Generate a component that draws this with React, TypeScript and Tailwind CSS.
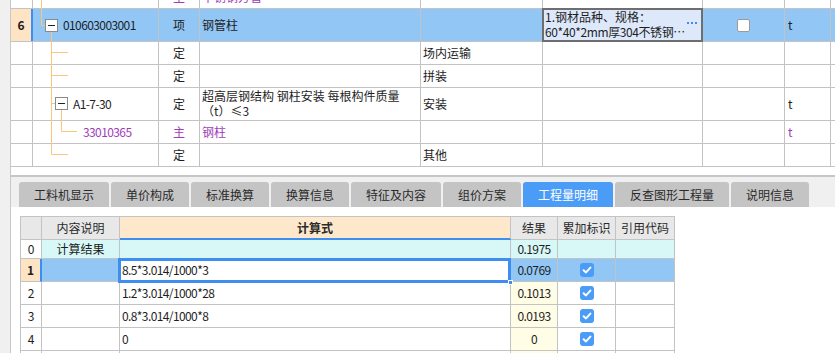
import React from "react";

type TopRowData = {
  h: string;
  num?: string;
  selected?: boolean;
  code?: string;
  codePl?: string;
  purple?: boolean;
  type?: string;
  name?: React.ReactNode;
  col5?: string;
  feature?: boolean;
  checkbox?: boolean;
  unit?: string;
};

const topRows: TopRowData[] = [
  { h: "h-[24px]", type: "主", name: "不锈钢方管", purple: true },
  {
    h: "h-[33px]",
    num: "6",
    selected: true,
    code: "010603003001",
    codePl: "pl-[30px]",
    type: "项",
    name: "钢管柱",
    feature: true,
    checkbox: true,
    unit: "t",
  },
  { h: "h-[23px]", type: "定", col5: "场内运输" },
  { h: "h-[23px]", type: "定", col5: "拼装" },
  {
    h: "h-[33px]",
    code: "A1-7-30",
    codePl: "pl-[40px]",
    type: "定",
    name: (
      <div className="leading-[15px] whitespace-nowrap">
        <div>超高层钢结构 钢柱安装 每根构件质量</div>
        <div>（t）≤3</div>
      </div>
    ),
    col5: "安装",
    unit: "t",
  },
  { h: "h-[23px]", code: "33010365", codePl: "pl-[50px]", purple: true, type: "主", name: "钢柱", unit: "t" },
  { h: "h-[23px]", type: "定", col5: "其他" },
];

function TopRow({ r }: { r: TopRowData }) {
  const bg = r.selected ? "bg-[#92c7f5]" : "bg-white";
  const txt = r.purple ? "text-[#a03cb8]" : "text-[#1e1e1e]";
  return (
    <div className={`flex ${r.h} border-b border-[#c3c3c3] ${txt}`}>
      <div
        className={`w-[22px] shrink-0 flex items-center justify-center font-bold text-[#222] ${
          r.selected ? "bg-[#fee4c4] border-r-2 border-r-[#3b8ef2]" : "bg-white border-r border-[#c3c3c3]"
        }`}
      >
        {r.num}
      </div>
      <div className={`w-[126px] shrink-0 border-r border-[#c3c3c3] flex items-center ${bg} ${r.codePl ?? ""}`}>
        <span className="tracking-[-0.6px]">{r.code}</span>
      </div>
      <div className={`w-[41px] shrink-0 border-r border-[#c3c3c3] flex items-center justify-center ${bg}`}>
        {r.type}
      </div>
      <div
        className={`w-[221px] shrink-0 border-r border-[#c3c3c3] flex pl-[2px] ${bg} ${
          typeof r.name === "string" ? "items-center" : "items-start"
        }`}
      >
        {r.name}
      </div>
      <div className={`w-[122px] shrink-0 border-r border-[#c3c3c3] flex items-center pl-[2px] ${bg}`}>{r.col5}</div>
      <div className={`relative w-[160px] shrink-0 border-r border-[#c3c3c3] ${r.feature ? "bg-[#dde9fb]" : bg}`}>
        {r.feature && (
          <>
            <div className="pl-[2px] leading-[15px] text-[#1e1e1e] w-[143px]">
              <div className="truncate">1.钢材品种、规格：</div>
              <div className="truncate tracking-[-0.4px]">60*40*2mm厚304不锈钢钢管</div>
            </div>
            <div className="absolute right-[5px] top-[13px] flex gap-[2px]">
              <span className="w-[2px] h-[2px] bg-[#3d8ef0]" />
              <span className="w-[2px] h-[2px] bg-[#3d8ef0]" />
              <span className="w-[2px] h-[2px] bg-[#3d8ef0]" />
            </div>
            <div className="absolute -left-px -top-px -right-px -bottom-px border-2 border-[#6e6e6e]" />
          </>
        )}
      </div>
      <div className={`w-[82px] shrink-0 border-r border-[#c3c3c3] flex items-center justify-center ${bg}`}>
        {r.checkbox && <div className="w-[13px] h-[13px] rounded-[2px] bg-white border border-[#9a9a9a]" />}
      </div>
      <div className={`w-[46px] shrink-0 border-r border-[#c3c3c3] flex items-center pl-[3px] ${bg}`}>{r.unit}</div>
      <div className={`flex-1 ${bg}`} />
    </div>
  );
}

function TreeLines() {
  const c = "#f9c77c";
  return (
    <svg
      className="absolute top-0 left-0 pointer-events-none"
      width="160"
      height="167"
      viewBox="11 0 160 167"
    >
      <g stroke={c} strokeWidth="1" fill="none">
        <path d="M41.5 0 V25.5 H45" />
        <path d="M51.5 32 V154.5" />
        <path d="M51.5 52.5 H68" />
        <path d="M51.5 75.5 H68" />
        <path d="M51.5 103.5 H55" />
        <path d="M61.5 110 V131.5 H77" />
        <path d="M51.5 154.5 H68" />
      </g>
      <rect x="45.5" y="19.5" width="12" height="12" fill="#fff" stroke="#8a8a8a" />
      <path d="M48 25.5 H55" stroke="#222" />
      <rect x="55.5" y="97.5" width="12" height="12" fill="#fff" stroke="#8a8a8a" />
      <path d="M58 103.5 H65" stroke="#222" />
    </svg>
  );
}

const tabs = [
  { label: "工料机显示", w: "w-[90px]" },
  { label: "单价构成", w: "w-[78px]" },
  { label: "标准换算", w: "w-[78px]" },
  { label: "换算信息", w: "w-[78px]" },
  { label: "特征及内容", w: "w-[90px]" },
  { label: "组价方案", w: "w-[78px]" },
  { label: "工程量明细", w: "w-[90px]", active: true },
  { label: "反查图形工程量", w: "w-[114px]" },
  { label: "说明信息", w: "w-[78px]" },
];

function Check() {
  return (
    <div className="w-[14px] h-[14px] rounded-[3px] bg-[#4a9cf6] flex items-center justify-center">
      <svg width="10" height="10" viewBox="0 0 10 10">
        <path
          d="M1.6 5.2 L4 7.4 L8.4 2.6"
          fill="none"
          stroke="#fff"
          strokeWidth="2"
          strokeLinecap="round"
          strokeLinejoin="round"
        />
      </svg>
    </div>
  );
}

const cell = "shrink-0 h-full border-r border-b border-[#c3c3c3] flex items-center";

const detailRows = [
  { n: "2", f: "1.2*3.014/1000*28", r: "0.1013" },
  { n: "3", f: "0.8*3.014/1000*8", r: "0.0193" },
  { n: "4", f: "0", r: "0" },
  { n: "", f: "", r: "", partial: true },
];

export default function App() {
  return (
    <div className="w-[835px] h-[353px] overflow-hidden flex bg-white text-[12px] text-[#1e1e1e] font-['Noto_Sans_CJK_SC',sans-serif]">
      <div className="w-[11px] shrink-0 bg-[#f0f0f0] border-r border-[#c8c8c8]" />
      <div className="flex-1 min-w-0 flex flex-col">
        <div className="relative h-[167px] overflow-hidden shrink-0">
          <div className="-mt-[15px]">
            {topRows.map((r, i) => (
              <TopRow key={i} r={r} />
            ))}
          </div>
          <TreeLines />
        </div>
        <div className="h-[8px] shrink-0" />
        <div className="h-[2px] shrink-0 bg-[#c6c6c6]" />
        <div className="h-[30px] shrink-0 bg-[#f0f0f0] flex items-end gap-[2px] pl-[8px]">
          {tabs.map((t) => (
            <div
              key={t.label}
              className={`${t.w} h-[25px] shrink-0 rounded-t-[3px] flex items-center justify-center ${
                t.active ? "bg-[#4a9cf6] text-white" : "bg-[#c4c4c4] text-[#2a2a2a]"
              }`}
            >
              {t.label}
            </div>
          ))}
        </div>
        <div className="pt-[9px] pl-[9px]">
          <div className="w-[655px] border-t border-l border-[#c3c3c3] text-[#1e1e1e]">
            <div className="flex h-[23px] text-[#2a2a2a]">
              <div className={`${cell} w-[21px] bg-[#e8e8e8]`} />
              <div className={`${cell} w-[78px] bg-[#e8e8e8] justify-center`}>内容说明</div>
              <div className="shrink-0 h-full w-[391px] border-r border-[#c3c3c3] border-b-2 border-b-[#3d8ef0] bg-[#fde8cb] flex items-center justify-center font-bold">
                计算式
              </div>
              <div className={`${cell} w-[47px] bg-[#e8e8e8] justify-center`}>结果</div>
              <div className={`${cell} w-[58px] bg-[#e8e8e8] justify-center`}>累加标识</div>
              <div className={`${cell} w-[59px] bg-[#e8e8e8] justify-center`}>引用代码</div>
            </div>
            <div className="flex h-[19px]">
              <div className={`${cell} w-[21px] bg-white justify-center`}>0</div>
              <div className={`${cell} w-[78px] bg-[#d8f7f7] justify-center`}>计算结果</div>
              <div className={`${cell} w-[391px] bg-[#d8f7f7]`} />
              <div className={`${cell} w-[47px] bg-[#d8f7f7] justify-center`}>
                <span className="tracking-[-0.6px]">0.1975</span>
              </div>
              <div className={`${cell} w-[58px] bg-[#d8f7f7]`} />
              <div className={`${cell} w-[59px] bg-[#d8f7f7]`} />
            </div>
            <div className="flex h-[23px]">
              <div className="shrink-0 h-full w-[21px] border-r-2 border-r-[#3b8ef2] border-b border-b-[#c3c3c3] bg-[#fee4c4] flex items-center justify-center font-bold">
                1
              </div>
              <div className={`${cell} w-[78px] bg-[#92c7f5]`} />
              <div className={`${cell} relative w-[391px] bg-white pl-[2px]`}>
                <span className="tracking-[-0.6px]">8.5*3.014/1000*3</span>
                <div className="absolute left-[-2px] top-[-1px] right-[-1px] bottom-[-2px] border-[3px] border-[#3d8ef0]" />
                <div className="absolute right-[-3px] bottom-[-4px] w-[5px] h-[5px] bg-[#3d8ef0] border border-white" />
              </div>
              <div className={`${cell} w-[47px] bg-[#92c7f5] justify-center`}>
                <span className="tracking-[-0.6px]">0.0769</span>
              </div>
              <div className={`${cell} w-[58px] bg-[#92c7f5] justify-center`}>
                <Check />
              </div>
              <div className={`${cell} w-[59px] bg-[#92c7f5]`} />
            </div>
            {detailRows.map((r, i) => (
              <div key={i} className="flex h-[23px]">
                <div className={`${cell} w-[21px] bg-white justify-center`}>{r.n}</div>
                <div className={`${cell} w-[78px] bg-white`} />
                <div className={`${cell} w-[391px] bg-white pl-[2px]`}>
                  <span className="tracking-[-0.6px]">{r.f}</span>
                </div>
                <div className={`${cell} w-[47px] bg-[#fffde6] justify-center`}>
                  <span className="tracking-[-0.6px]">{r.r}</span>
                </div>
                <div className={`${cell} w-[58px] bg-white justify-center`}>{!r.partial && <Check />}</div>
                <div className={`${cell} w-[59px] bg-white`} />
              </div>
            ))}
          </div>
        </div>
      </div>
    </div>
  );
}
